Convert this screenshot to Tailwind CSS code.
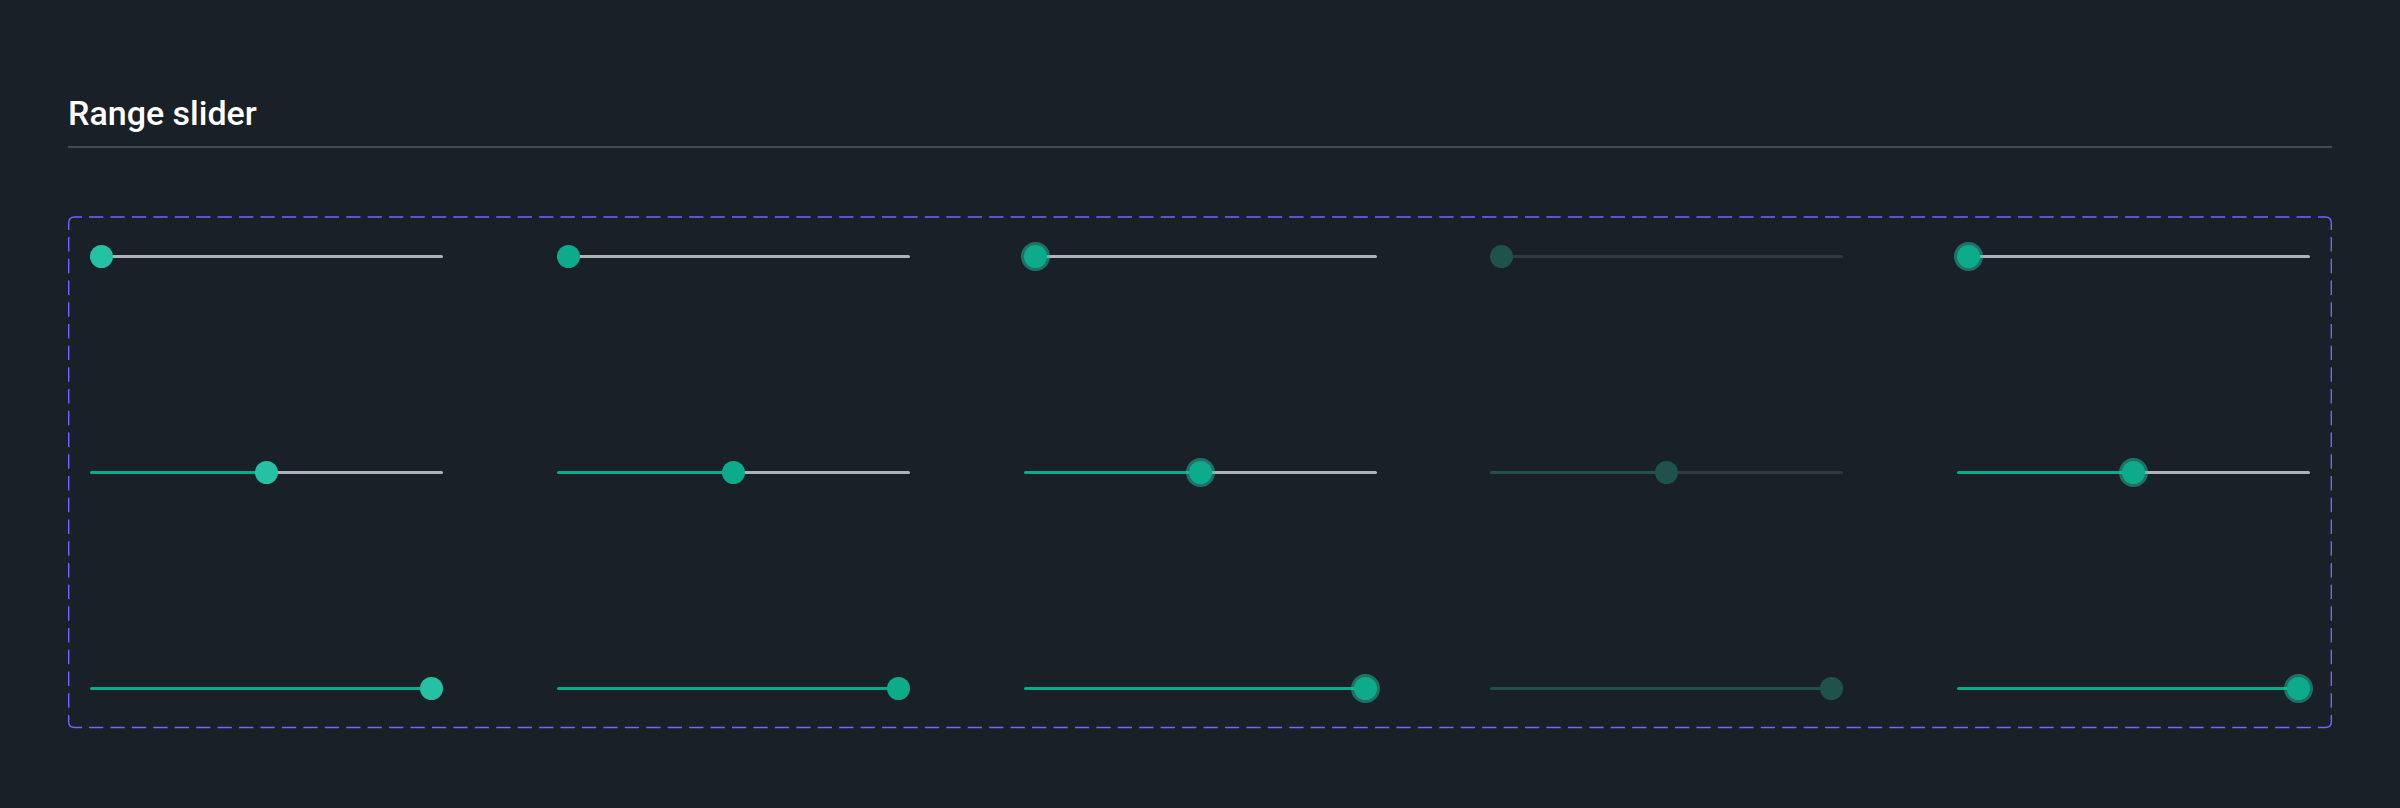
<!DOCTYPE html>
<html lang="en">
<head>
<meta charset="utf-8">
<meta name="viewport" content="width=device-width, initial-scale=1">
<title>Range slider</title>
<script src="https://cdn.jsdelivr.net/npm/@tailwindcss/browser@4"></script>
</head>
<body class="min-h-screen bg-[#1a2027] font-[Roboto,sans-serif]">
<main class="px-[68px] pt-[90px] pb-[79px]">
  <h1 class="border-b-2 border-[#47494e] pb-[10px] text-[34px] leading-[46px] font-medium text-white">Range slider</h1>
  <section aria-label="Slider states" class="relative mt-[68px] px-[22px] pt-[28px] pb-[29px]">
    <!-- dashed frame: sides -->
    <svg class="pointer-events-none absolute top-0 left-[21px] h-[2px] w-[calc(100%-35px)]" aria-hidden="true"><line x1="0" y1="1" x2="100%" y2="1" pathLength="312" stroke="#7b61ff" stroke-width="1.4" stroke-dasharray="2 1"/></svg>
    <svg class="pointer-events-none absolute bottom-0 left-[21px] h-[3px] w-[calc(100%-35px)]" aria-hidden="true"><line x1="0" y1="1.5" x2="100%" y2="1.5" pathLength="312" stroke="#7b61ff" stroke-width="1.4" stroke-dasharray="2 1"/></svg>
    <svg class="pointer-events-none absolute top-[21px] left-0 h-[calc(100%-35px)] w-[2px]" aria-hidden="true"><line x1=".7" y1="0" x2=".7" y2="100%" pathLength="66" stroke="#7b61ff" stroke-width="1.4" stroke-dasharray="2 1"/></svg>
    <svg class="pointer-events-none absolute top-[21px] right-0 h-[calc(100%-35px)] w-[2px]" aria-hidden="true"><line x1="1.3" y1="0" x2="1.3" y2="100%" pathLength="66" stroke="#7b61ff" stroke-width="1.4" stroke-dasharray="2 1"/></svg>
    <!-- dashed frame: corners -->
    <svg class="pointer-events-none absolute top-0 left-0 size-[14px]" viewBox="0 0 14 14" fill="none" stroke="#7b61ff" stroke-width="1.4" aria-hidden="true"><path d="M.7 14V7Q.7 1 7 1H14"/></svg>
    <svg class="pointer-events-none absolute top-0 right-0 size-[14px]" viewBox="0 0 14 14" fill="none" stroke="#7b61ff" stroke-width="1.4" aria-hidden="true"><path d="M13.3 14V7Q13.3 1 7 1H0"/></svg>
    <svg class="pointer-events-none absolute bottom-0 left-0 size-[14px]" viewBox="0 0 14 14" fill="none" stroke="#7b61ff" stroke-width="1.4" aria-hidden="true"><path d="M.7 0V7Q.7 12.5 7 12.5H14"/></svg>
    <svg class="pointer-events-none absolute right-0 bottom-0 size-[14px]" viewBox="0 0 14 14" fill="none" stroke="#7b61ff" stroke-width="1.4" aria-hidden="true"><path d="M13.3 0V7Q13.3 12.5 7 12.5H0"/></svg>

    <div class="flex flex-col gap-[192px]
      [&_input]:m-0 [&_input]:block [&_input]:h-6 [&_input]:w-[353px] [&_input]:min-w-0 [&_input]:appearance-none [&_input]:bg-transparent
      [&_input::-webkit-slider-runnable-track]:h-[3px] [&_input::-webkit-slider-runnable-track]:rounded-full
      [&_input::-webkit-slider-thumb]:-mt-[10px] [&_input::-webkit-slider-thumb]:size-[23px] [&_input::-webkit-slider-thumb]:appearance-none [&_input::-webkit-slider-thumb]:rounded-full [&_input::-webkit-slider-thumb]:bg-[#0daa8c]
      [&_.hov::-webkit-slider-thumb]:bg-[#25c1a4]
      [&_.foc::-webkit-slider-thumb]:shadow-[0_0_0_3px_#25c1a480]
      [&_input:disabled]:opacity-100 [&_input:disabled::-webkit-slider-thumb]:bg-[#1f524d]">
      <div class="flex justify-between [&_input::-webkit-slider-runnable-track]:bg-[#adb2bb] [&_input:disabled::-webkit-slider-runnable-track]:bg-[#32383f]">
        <input class="hov" type="range" value="0" aria-label="Hover, minimum">
        <input type="range" value="0" aria-label="Default, minimum">
        <input class="foc" type="range" value="0" aria-label="Focus, minimum">
        <input type="range" value="0" disabled aria-label="Disabled, minimum">
        <input class="foc" type="range" value="0" aria-label="Active, minimum">
      </div>
      <div class="flex justify-between [&_input::-webkit-slider-runnable-track]:bg-[linear-gradient(90deg,#0daa8c_50%,#adb2bb_50%)] [&_input:disabled::-webkit-slider-runnable-track]:bg-[linear-gradient(90deg,#1f524d_50%,#32383f_50%)]">
        <input class="hov" type="range" value="50" aria-label="Hover, middle">
        <input type="range" value="50" aria-label="Default, middle">
        <input class="foc" type="range" value="50" aria-label="Focus, middle">
        <input type="range" value="50" disabled aria-label="Disabled, middle">
        <input class="foc" type="range" value="50" aria-label="Active, middle">
      </div>
      <div class="flex justify-between [&_input::-webkit-slider-runnable-track]:bg-[#0daa8c] [&_input:disabled::-webkit-slider-runnable-track]:bg-[#1f524d]">
        <input class="hov" type="range" value="100" aria-label="Hover, maximum">
        <input type="range" value="100" aria-label="Default, maximum">
        <input class="foc" type="range" value="100" aria-label="Focus, maximum">
        <input type="range" value="100" disabled aria-label="Disabled, maximum">
        <input class="foc" type="range" value="100" aria-label="Active, maximum">
      </div>
    </div>
  </section>
</main>
</body>
</html>
